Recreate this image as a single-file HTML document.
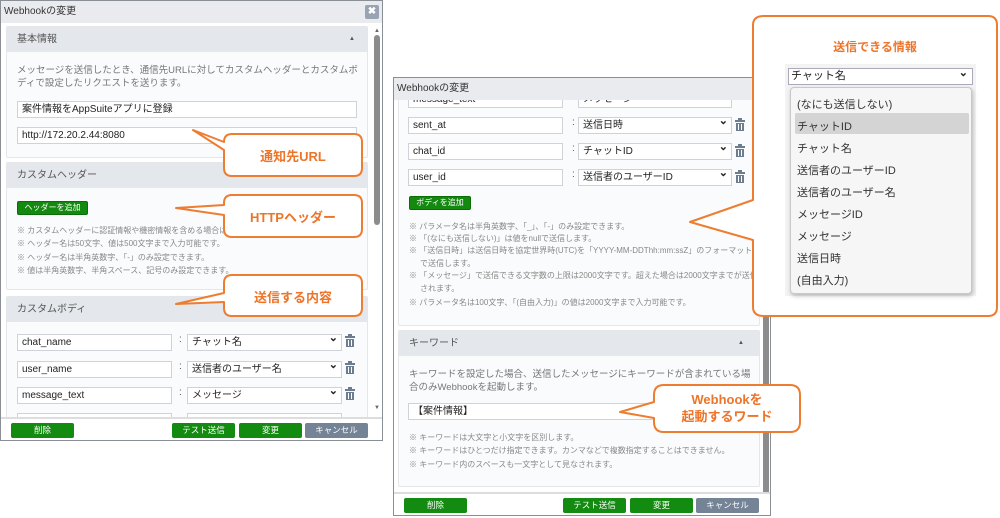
<!DOCTYPE html>
<html><head><meta charset="utf-8">
<style>
*{box-sizing:border-box;margin:0;padding:0}
body{width:1000px;height:518px;background:#fff;position:relative;overflow:hidden;font-family:"Liberation Sans","Noto Sans CJK JP",sans-serif;color:#333}
.a{position:absolute}
.dlg{position:absolute;background:#fff;border:1px solid #8a8f96;overflow:hidden}
.title{position:absolute;left:0;top:0;right:0;height:22px;background:#e9ebee;font-size:10px;line-height:22px;padding-left:3px;color:#333}
.sec{position:absolute;background:#fafbfc;border:1px solid #e4e6ea;border-radius:2px}
.sh{position:absolute;background:#e4e7eb;font-size:10px;color:#555;line-height:25px;padding-left:10px}
.inp{position:absolute;height:17px;border:1px solid #cfd3d8;background:#fff;font-size:10px;line-height:15px;padding-left:4px;color:#222}
.sel{position:absolute;height:17px;border:1px solid #cfd3d8;background:#fff;font-size:10px;line-height:15px;padding-left:4px;color:#222}
.sel:after{content:"⌄";position:absolute;right:3px;top:-4px;font-size:11px;font-weight:bold}
.tx{position:absolute;font-size:9.5px;color:#777;line-height:13px}
.nt{position:absolute;font-size:8px;color:#888;line-height:13px;white-space:nowrap}
.gb{position:absolute;height:14px;background:#13890f;border:1px solid #0b6c08;border-radius:2px;color:#fff;font-size:8px;line-height:12px;text-align:center}
.bb{position:absolute;height:15px;border-radius:2px;color:#fff;font-size:8.5px;line-height:15px;text-align:center;background:#138a10}
.gray{background:#748396}
.col{position:absolute;font-size:10px;color:#555}
.tr{position:absolute;width:10px;height:13px}
.co{position:absolute;color:#ed7428;font-weight:bold;font-size:13px;text-align:center}
</style></head><body>

<!-- LEFT DIALOG -->
<div class="dlg" style="left:0;top:0;width:383px;height:441px;">
 <div class="title">Webhookの変更</div>
 <div class="a" style="left:364px;top:4px;width:14px;height:14px;background:#98a3b3;border-radius:2px;color:#fff;font-size:10px;font-weight:bold;text-align:center;line-height:14px">✖</div>
 <div class="a" style="left:372px;top:27px;width:8px;height:390px;">
  <div class="a" style="left:1px;top:0;font-size:6px;color:#666">▲</div>
  <div class="a" style="left:1px;top:7px;width:6px;height:190px;background:#8c8c8c;border-radius:3px"></div>
  <div class="a" style="left:1px;top:377px;font-size:6px;color:#666">▼</div>
 </div>
 <div class="sec" style="left:5px;top:25px;width:362px;height:132px"></div>
 <div class="sh" style="left:6px;top:26px;width:360px;height:25px">基本情報<span class="a" style="left:342px;top:0;font-size:6px">▲</span></div>
 <div class="tx" style="left:16px;top:63px;width:345px">メッセージを送信したとき、通信先URLに対してカスタムヘッダーとカスタムボディで設定したリクエストを送ります。</div>
 <div class="inp" style="left:16px;top:100px;width:340px">案件情報をAppSuiteアプリに登録</div>
 <div class="inp" style="left:16px;top:126px;width:340px">http://172.20.2.44:8080</div>

 <div class="sec" style="left:5px;top:161px;width:362px;height:128px"></div>
 <div class="sh" style="left:6px;top:162px;width:360px;height:25px">カスタムヘッダー</div>
 <div class="gb" style="left:16px;top:200px;width:71px">ヘッダーを追加</div>
 <div class="nt" style="left:16px;top:223px">※ カスタムヘッダーに認証情報や機密情報を含める場合は取</div>
 <div class="nt" style="left:16px;top:236px">※ ヘッダー名は50文字、値は500文字まで入力可能です。</div>
 <div class="nt" style="left:16px;top:250px">※ ヘッダー名は半角英数字、「-」のみ設定できます。</div>
 <div class="nt" style="left:16px;top:263px">※ 値は半角英数字、半角スペース、記号のみ設定できます。</div>

 <div class="sec" style="left:5px;top:295px;width:362px;height:130px"></div>
 <div class="sh" style="left:6px;top:296px;width:360px;height:25px">カスタムボディ</div>
 <div class="inp" style="left:16px;top:333px;width:155px">chat_name</div><div class="col" style="left:178px;top:333px">:</div><div class="sel" style="left:186px;top:333px;width:155px">チャット名</div>
 <div class="inp" style="left:16px;top:360px;width:155px">user_name</div><div class="col" style="left:178px;top:360px">:</div><div class="sel" style="left:186px;top:360px;width:155px">送信者のユーザー名</div>
 <div class="inp" style="left:16px;top:386px;width:155px">message_text</div><div class="col" style="left:178px;top:386px">:</div><div class="sel" style="left:186px;top:386px;width:155px">メッセージ</div>
 <div class="inp" style="left:16px;top:412px;width:155px"></div><div class="sel" style="left:186px;top:412px;width:155px"></div>
 <svg class="tr" style="left:344px;top:333px" viewBox="0 0 10 13"><rect x="0" y="2" width="10" height="2" fill="#6d7d90"/><rect x="3" y="0" width="4" height="2" fill="#6d7d90"/><rect x="1" y="5" width="8" height="8" fill="#6d7d90"/><rect x="3" y="6" width="1" height="6" fill="#fff"/><rect x="6" y="6" width="1" height="6" fill="#fff"/></svg>
 <svg class="tr" style="left:344px;top:360px" viewBox="0 0 10 13"><rect x="0" y="2" width="10" height="2" fill="#6d7d90"/><rect x="3" y="0" width="4" height="2" fill="#6d7d90"/><rect x="1" y="5" width="8" height="8" fill="#6d7d90"/><rect x="3" y="6" width="1" height="6" fill="#fff"/><rect x="6" y="6" width="1" height="6" fill="#fff"/></svg>
 <svg class="tr" style="left:344px;top:386px" viewBox="0 0 10 13"><rect x="0" y="2" width="10" height="2" fill="#6d7d90"/><rect x="3" y="0" width="4" height="2" fill="#6d7d90"/><rect x="1" y="5" width="8" height="8" fill="#6d7d90"/><rect x="3" y="6" width="1" height="6" fill="#fff"/><rect x="6" y="6" width="1" height="6" fill="#fff"/></svg>
 <div class="a" style="left:0;top:416px;width:383px;height:25px;background:#fff;border-top:2px solid #ddd"></div>
 <div class="bb" style="left:10px;top:422px;width:63px">削除</div>
 <div class="bb" style="left:171px;top:422px;width:63px">テスト送信</div>
 <div class="bb" style="left:238px;top:422px;width:63px">変更</div>
 <div class="bb gray" style="left:304px;top:422px;width:63px">キャンセル</div>
</div>

<!-- RIGHT DIALOG -->
<div class="dlg" style="left:393px;top:77px;width:378px;height:439px;">
 <div class="sec" style="left:4px;top:0px;width:362px;height:248px;border-top:none"></div>
 <div class="inp" style="left:14px;top:13px;width:155px">message_text</div><div class="sel" style="left:184px;top:13px;width:154px">メッセージ</div>
 <div class="title">Webhookの変更</div>
 <div class="a" style="left:369px;top:24px;width:7px;height:410px;">
  <div class="a" style="left:0;top:8px;width:6px;height:392px;background:#8c8c8c;border-radius:3px"></div>
 </div>
 <div class="inp" style="left:14px;top:39px;width:155px">sent_at</div><div class="col" style="left:178px;top:39px">:</div><div class="sel" style="left:184px;top:39px;width:154px">送信日時</div>
 <div class="inp" style="left:14px;top:65px;width:155px">chat_id</div><div class="col" style="left:178px;top:65px">:</div><div class="sel" style="left:184px;top:65px;width:154px">チャットID</div>
 <div class="inp" style="left:14px;top:91px;width:155px">user_id</div><div class="col" style="left:178px;top:91px">:</div><div class="sel" style="left:184px;top:91px;width:154px">送信者のユーザーID</div>
 <svg class="tr" style="left:341px;top:40px" viewBox="0 0 10 13"><rect x="0" y="2" width="10" height="2" fill="#6d7d90"/><rect x="3" y="0" width="4" height="2" fill="#6d7d90"/><rect x="1" y="5" width="8" height="8" fill="#6d7d90"/><rect x="3" y="6" width="1" height="6" fill="#fff"/><rect x="6" y="6" width="1" height="6" fill="#fff"/></svg>
 <svg class="tr" style="left:341px;top:66px" viewBox="0 0 10 13"><rect x="0" y="2" width="10" height="2" fill="#6d7d90"/><rect x="3" y="0" width="4" height="2" fill="#6d7d90"/><rect x="1" y="5" width="8" height="8" fill="#6d7d90"/><rect x="3" y="6" width="1" height="6" fill="#fff"/><rect x="6" y="6" width="1" height="6" fill="#fff"/></svg>
 <svg class="tr" style="left:341px;top:92px" viewBox="0 0 10 13"><rect x="0" y="2" width="10" height="2" fill="#6d7d90"/><rect x="3" y="0" width="4" height="2" fill="#6d7d90"/><rect x="1" y="5" width="8" height="8" fill="#6d7d90"/><rect x="3" y="6" width="1" height="6" fill="#fff"/><rect x="6" y="6" width="1" height="6" fill="#fff"/></svg>
 <div class="gb" style="left:15px;top:118px;width:62px">ボディを追加</div>
 <div class="nt" style="left:15px;top:142px">※ パラメータ名は半角英数字、「_」、「-」のみ設定できます。</div>
 <div class="nt" style="left:15px;top:154px">※ 「(なにも送信しない)」は値をnullで送信します。</div>
 <div class="nt" style="left:15px;top:166px">※ 「送信日時」は送信日時を協定世界時(UTC)を「YYYY-MM-DDThh:mm:ssZ」のフォーマット</div>
 <div class="nt" style="left:26px;top:179px">で送信します。</div>
 <div class="nt" style="left:15px;top:191px">※ 「メッセージ」で送信できる文字数の上限は2000文字です。超えた場合は2000文字までが送信</div>
 <div class="nt" style="left:26px;top:204px">されます。</div>
 <div class="nt" style="left:15px;top:218px">※ パラメータ名は100文字、「(自由入力)」の値は2000文字まで入力可能です。</div>

 <div class="sec" style="left:4px;top:252px;width:362px;height:157px"></div>
 <div class="sh" style="left:5px;top:253px;width:360px;height:25px">キーワード<span class="a" style="left:339px;top:0;font-size:6px">▲</span></div>
 <div class="tx" style="left:15px;top:290px;width:350px">キーワードを設定した場合、送信したメッセージにキーワードが含まれている場合のみWebhookを起動します。</div>
 <div class="inp" style="left:14px;top:325px;width:332px">【案件情報】</div>
 <div class="nt" style="left:15px;top:353px">※ キーワードは大文字と小文字を区別します。</div>
 <div class="nt" style="left:15px;top:366px">※ キーワードはひとつだけ指定できます。カンマなどで複数指定することはできません。</div>
 <div class="nt" style="left:15px;top:380px">※ キーワード内のスペースも一文字として見なされます。</div>
 <div class="a" style="left:0;top:414px;width:378px;height:25px;background:#fff;border-top:2px solid #ddd"></div>
 <div class="bb" style="left:10px;top:420px;width:63px">削除</div>
 <div class="bb" style="left:169px;top:420px;width:63px">テスト送信</div>
 <div class="bb" style="left:236px;top:420px;width:63px">変更</div>
 <div class="bb gray" style="left:302px;top:420px;width:63px">キャンセル</div>
</div>

<!-- CALLOUTS -->
<svg class="a" style="left:0;top:0" width="1000" height="518">
 <g fill="#fff" stroke="#ed7d31" stroke-width="2" stroke-linejoin="round">
  <path d="M232,134 H354 Q362,134 362,142 V168 Q362,176 354,176 H232 Q224,176 224,168 V150 L193,130 L224,142 V142 Q224,134 232,134 Z"/>
  <path d="M232,195 H354 Q362,195 362,203 V229 Q362,237 354,237 H232 Q224,237 224,229 V215 L176,208 L224,205 V203 Q224,195 232,195 Z"/>
  <path d="M232,275 H354 Q362,275 362,283 V308 Q362,316 354,316 H232 Q224,316 224,308 V302 L176,304 L224,293 V283 Q224,275 232,275 Z"/>
  <path d="M664,385 H790 Q800,385 800,395 V422 Q800,432 790,432 H664 Q654,432 654,422 V418 L620,412 L654,402 V395 Q654,385 664,385 Z"/>
  <path d="M764,16 H988 Q997,16 997,25 V307 Q997,316 988,316 H764 Q753,316 753,307 V240 L690,222 L753,200 V25 Q753,16 764,16 Z"/>
 </g>
</svg>
<div class="co" style="left:654px;top:391px;width:146px;line-height:17px">Webhookを<br>起動するワード</div>
<div class="co" style="left:224px;top:146px;width:138px">通知先URL</div>
<div class="co" style="left:224px;top:207px;width:138px">HTTPヘッダー</div>
<div class="co" style="left:224px;top:287px;width:138px">送信する内容</div>
<div class="co" style="left:753px;top:38px;width:244px;font-size:12px">送信できる情報</div>

<!-- dropdown -->
<div class="a" style="left:785px;top:64px;width:191px;height:232px;background:#f3f3f3"></div>
<div class="a" style="left:788px;top:68px;width:185px;height:17px;border:1px solid #aab;background:#fff;font-size:11px;line-height:15px;padding-left:2px;color:#222">チャット名<span class="a" style="right:4px;top:-3px;font-weight:bold">⌄</span></div>
<div class="a" style="left:790px;top:87px;width:182px;height:207px;border:1px solid #c8c8c8;border-radius:4px;background:#f6f6f6;box-shadow:1px 2px 4px rgba(0,0,0,.25);font-size:11px;color:#333">
 <div class="a" style="left:4px;top:25px;width:174px;height:21px;background:#d4d4d4;border-radius:2px"></div>
 <div class="a" style="left:6px;top:6px;line-height:22px">(なにも送信しない)<br>チャットID<br>チャット名<br>送信者のユーザーID<br>送信者のユーザー名<br>メッセージID<br>メッセージ<br>送信日時<br>(自由入力)</div>
</div>
</body></html>
